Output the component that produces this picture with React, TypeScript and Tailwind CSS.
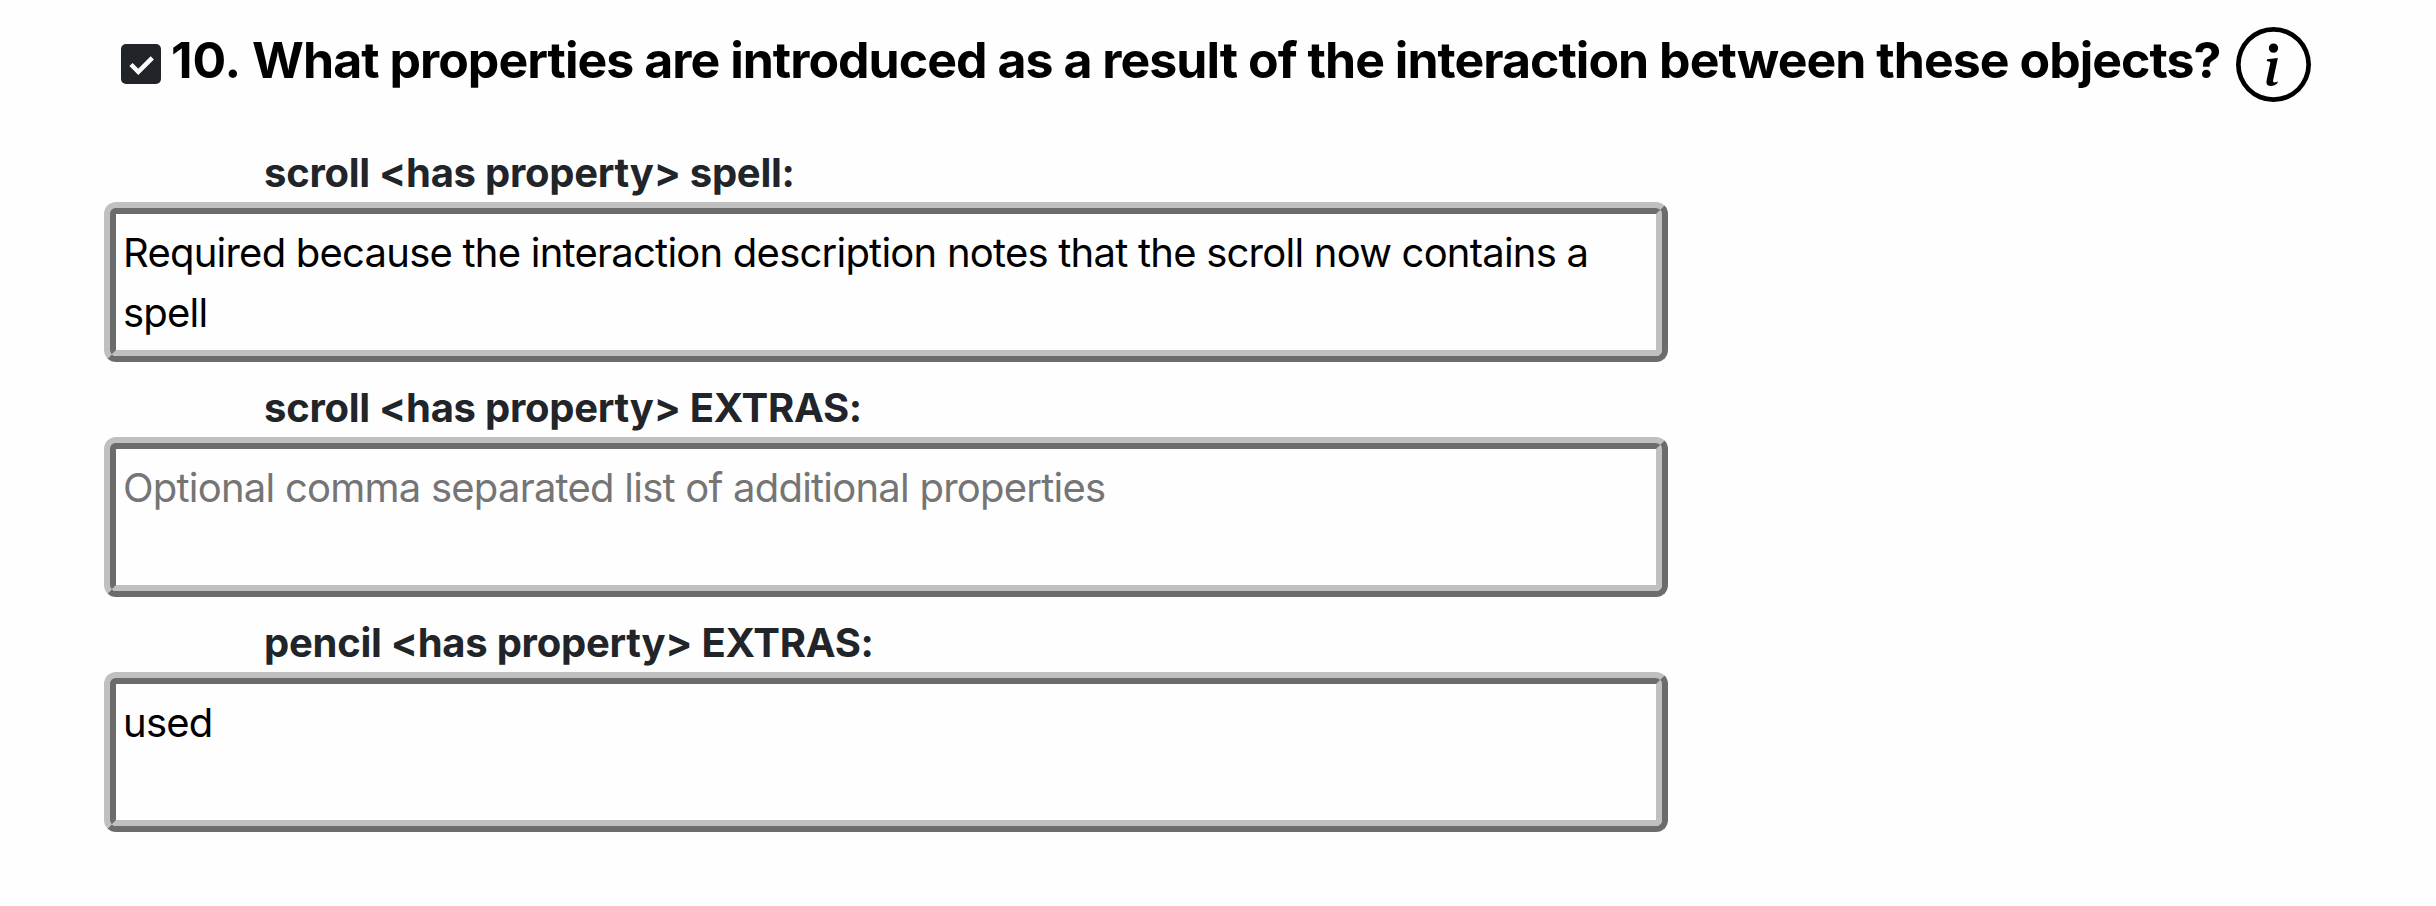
import { BsInfoCircle } from "react-icons/bs";

type Field = { id: string; label: string; value?: string; placeholder?: string };

const fields: Field[] = [
  {
    id: "scroll-spell",
    label: "scroll <has property> spell:",
    value: "Required because the interaction description notes that the scroll now contains a spell",
  },
  {
    id: "scroll-extras",
    label: "scroll <has property> EXTRAS:",
    placeholder: "Optional comma separated list of additional properties",
  },
  { id: "pencil-extras", label: "pencil <has property> EXTRAS:", value: "used" },
];

function CheckBadge() {
  return (
    <svg viewBox="0 0 40 40" className="mt-[17px] size-10 shrink-0" aria-hidden="true">
      <rect width="40" height="40" rx="5" fill="#212529" />
      <path d="M10 20.5l7.3 7.3 14-14" fill="none" stroke="#fff" strokeWidth="4.5" />
    </svg>
  );
}

function PropertyField({ id, label, value, placeholder }: Field) {
  return (
    <div className="flex flex-col">
      <label htmlFor={id} className="h-[60px] pt-px pl-40 font-bold tracking-[-0.26px] text-[#212529]">
        {label}
      </label>
      {/* Two nested bevels form the ridge. */}
      <div className="h-40 w-[1564px] rounded-xl border-6 border-t-[#c0c0c0] border-r-[#6c6c6c] border-b-[#6c6c6c] border-l-[#c0c0c0]">
        <textarea
          id={id}
          defaultValue={value}
          placeholder={placeholder}
          className="block size-full resize-none overflow-hidden rounded-md border-6 border-t-[#6c6c6c] border-r-[#c0c0c0] border-b-[#c0c0c0] border-l-[#6c6c6c] px-[7px] pt-[9px] pb-[7px] tracking-[-0.77px] text-black outline-none placeholder:text-[#757575]"
        />
      </div>
    </div>
  );
}

export default function App() {
  return (
    <main className="h-[906px] overflow-hidden bg-[#fefefe] pt-[27px] font-['Inter',sans-serif] text-[40px] leading-[60px]">
      <header className="flex h-[75px] items-start pl-[121px]">
        <CheckBadge />
        <h1 className="mt-[3px] ml-2.5 w-[2065px] shrink-0 text-[50px] leading-[60px] font-bold tracking-[-0.97px] whitespace-nowrap text-black">
          <span className="tracking-[-0.1px]">10.</span> What properties are introduced as a result of the interaction between these objects?
        </h1>
        <BsInfoCircle className="size-[75px] shrink-0 text-black" />
      </header>
      <section className="mt-10 flex flex-col gap-[15px] pl-26">
        {fields.map((field) => (
          <PropertyField key={field.id} {...field} />
        ))}
      </section>
    </main>
  );
}
